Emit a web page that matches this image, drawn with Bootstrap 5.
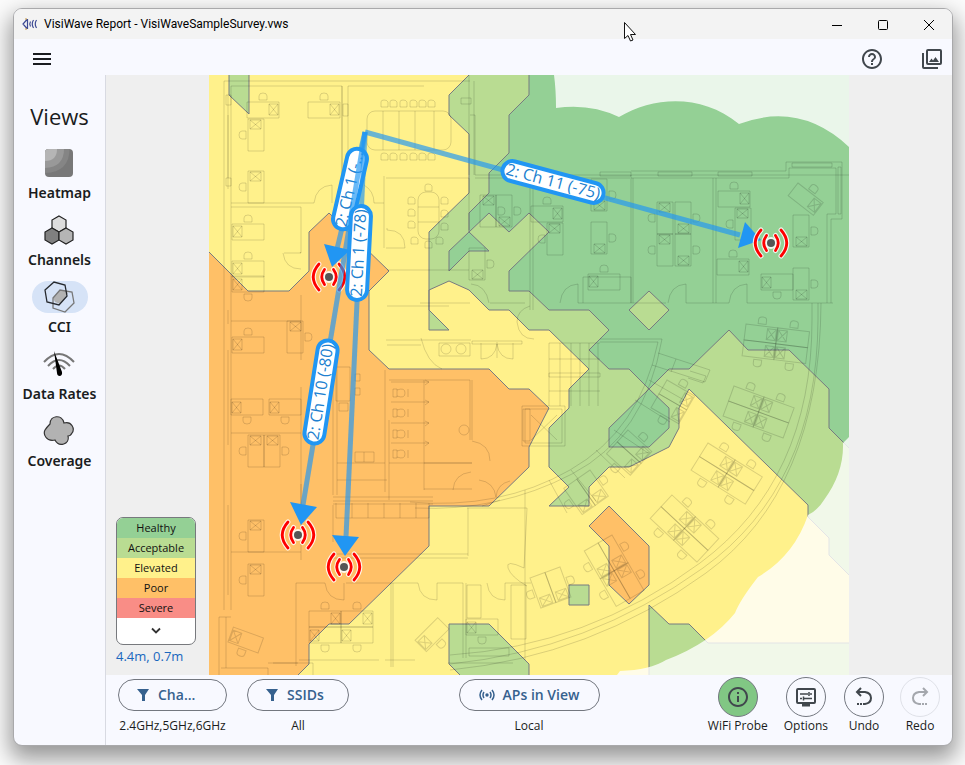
<!DOCTYPE html>
<html lang="en">
<head>
<meta charset="utf-8">
<meta name="viewport" content="width=device-width, initial-scale=1">
<title>VisiWave Report - VisiWaveSampleSurvey.vws</title>
<link href="https://cdn.jsdelivr.net/npm/bootstrap@5.3.0/dist/css/bootstrap.min.css" rel="stylesheet">
<style>
body{font-family:"Open Sans","Noto Sans",sans-serif;font-size:12px;line-height:20px;color:#1a1c20;background:#fbfbfb;padding:8px 12px 19px 13px}
.app-window{background:#f8f9ff;border:1px solid #a9a9ab;border-radius:9px;box-shadow:0 10px 22px 3px rgba(0,0,0,.4)}
.title-bar{background:#f3f3f3;height:30px;font-family:Roboto,"Open Sans",sans-serif;color:#000}
.win-btn{width:46px;height:30px;padding:0;border:0;background:none;color:#000}
.tool-bar{height:36px;padding-top:4px}
.tool-icons{gap:36px}
.plain-btn{border:0;background:none;padding:0;color:#41474d}
.side-nav{width:91px;padding-top:25px}
.views-title{font-weight:400;font-size:22px;line-height:32px;margin:0 0 15px}
.view-link{color:#1a1c20;font-family:"Noto Sans",sans-serif;font-size:14px;font-weight:600;text-decoration:none;margin-bottom:11px}
.view-icon{width:56px;height:32px;border-radius:16px;margin-bottom:4px}
.view-icon.current{background:#d6e3f7}
.map-pane{background:#efefef;border-left:1px solid #d8dae2;min-height:0}
.map-pane>svg{height:100%;width:100%}
.legend-box{left:10px;bottom:8px}
.legend-list{width:80px;border:1px solid #77797d;border-radius:7px;background:#fff;color:#111;font-size:11px}
.healthy{background:#94d095}.acceptable{background:#b9dc92}.elevated{background:#fff18b}.poor{background:#ffc067}.severe{background:#f98d86}
.legend-more{height:26px}
.position-text{color:#1967be;font-size:13px;line-height:22px}
.bottom-bar{display:grid;grid-template-columns:1fr auto 1fr;padding:2px 12px 9px;border-left:1px solid #d8dae2}
.pill-btn{height:32px;border:1px solid #73777f;border-radius:16px;background:none;color:#36618e;font-weight:600;font-size:14px;padding:0 17px;margin:2px 0 5px}
.round-btn{width:40px;height:40px;border:1px solid #73777f;border-radius:50%;background:none;color:#41474d;padding:0;margin-bottom:-1px}
.round-btn.active-probe{background:#81c784}
.round-btn:disabled{border-color:#dfe1e8;color:#a4a7ad}
.filter-w{width:109px}.ssid-w{width:102px}.aps-w{width:141px}
.pointer{left:624px;top:22px}
.plan{fill:none;stroke:#000;stroke-opacity:.14;stroke-width:1}
.contour{stroke:#777b80;stroke-width:1}
.link-line{stroke:#2196f3;stroke-opacity:.67;stroke-width:5;fill:none}
.tag-box{fill:#fff;stroke:#2196f3;stroke-width:4}
.tag-text{fill:#2080cf;font-family:"Open Sans",sans-serif;font-size:16px;text-anchor:middle}
</style>
<script src="https://cdn.jsdelivr.net/npm/bootstrap@5.3.0/dist/js/bootstrap.bundle.min.js"></script>
</head>
<body class="vh-100 d-flex">
<div class="app-window d-flex flex-column flex-grow-1 overflow-hidden">
  <header class="title-bar d-flex align-items-center flex-shrink-0">
    <svg class="ms-2 me-1" width="18" height="14" viewBox="0 0 18 14" fill="none" stroke="#3d4a94"><path d="M5 2.500 1 7l4 4.500M5.500 2v10M8.500 4.500q-1.500 2.500 0 5M11.500 3q-2.500 4 0 8M14.500 3q-2.500 4 0 8" stroke-width="1.200"/><path d="M4 1v2M4 11v2" stroke="#c69a45"/></svg>
    <span>VisiWave Report - VisiWaveSampleSurvey.vws</span>
    <div class="ms-auto d-flex">
      <button class="win-btn" aria-label="Minimize"><svg width="10" height="10" stroke="currentColor" fill="none"><path d="M0 5.500h10"/></svg></button>
      <button class="win-btn" aria-label="Maximize"><svg width="10" height="10" stroke="currentColor" fill="none"><rect x=".5" y=".5" width="9" height="9" rx="1"/></svg></button>
      <button class="win-btn" aria-label="Close"><svg width="10" height="10" stroke="currentColor" fill="none"><path d="M0 0l10 10M10 0L0 10"/></svg></button>
    </div>
  </header>
  <div class="tool-bar d-flex align-items-center flex-shrink-0 ps-3 pe-2">
    <button class="plain-btn" aria-label="Menu"><svg width="24" height="24" fill="#1a1c20"><path d="M3 6h18v2H3zM3 11h18v2H3zM3 16h18v2H3z"/></svg></button>
    <div class="tool-icons d-flex ms-auto">
    <button class="plain-btn" aria-label="Help"><svg width="24" height="24" fill="currentColor"><path d="M11 18h2v-2h-2v2zm1-16C6.480 2 2 6.480 2 12s4.480 10 10 10 10-4.480 10-10S17.520 2 12 2zm0 18c-4.410 0-8-3.590-8-8s3.590-8 8-8 8 3.590 8 8-3.590 8-8 8zm0-14c-2.210 0-4 1.790-4 4h2c0-1.100.9-2 2-2s2 .9 2 2c0 2-3 1.750-3 5h2c0-2.250 3-2.500 3-5 0-2.210-1.790-4-4-4z"/></svg></button>
    <button class="plain-btn" aria-label="Screenshots"><svg width="24" height="24" fill="none" stroke="currentColor" stroke-width="2"><rect x="7" y="3" width="14" height="14" rx="1"/><path d="M3 6v14q0 1 1 1h14"/><path d="M9 15l2.500-3.500 1.500 2 2.500-3.500 3.500 5z" fill="currentColor" stroke="none"/></svg></button>
    </div>
  </div>
  <div class="d-flex flex-grow-1 overflow-hidden">
    <nav class="side-nav d-flex flex-column align-items-center flex-shrink-0">
      <h1 class="views-title">Views</h1>
      <a href="#" class="view-link d-flex flex-column align-items-center"><span class="view-icon d-flex align-items-center justify-content-center"><svg width="28" height="28"><defs><clipPath id="sq"><rect width="28" height="28" rx="4"/></clipPath></defs><g clip-path="url(#sq)"><rect width="28" height="28" fill="#787878"/><path d="M0 0h24.500q0 23-24.500 24z" fill="#858585"/><path d="M0 0h19q0 18-19 19z" fill="#999"/><path d="M0 0h12q0 12-12 12z" fill="#b5b5b5"/></g></svg></span>Heatmap</a>
      <a href="#" class="view-link d-flex flex-column align-items-center"><span class="view-icon d-flex align-items-center justify-content-center"><svg width="32" height="30" stroke="#222" stroke-width="1.200"><path d="M16 1l7 4v8l-7 4-7-4V5z" fill="#ddd"/><path d="M9 13l7 4v8l-7 4-7-4v-8z" fill="#808080"/><path d="M23 13l7 4v8l-7 4-7-4v-8z" fill="#b5b5b5"/></svg></span>Channels</a>
      <a href="#" class="view-link d-flex flex-column align-items-center" aria-current="page"><span class="view-icon current d-flex align-items-center justify-content-center"><svg width="32" height="32" fill="none" stroke-width="1.300"><path d="M9 17l7-8 6 1 2 2-8 11-5-2z" fill="#b2b2b2"/><path d="M9 17l7-8 12 2 2 11-9 9-12-4z" stroke="#777"/><path d="M1 9l9-8 11 3 2 11-8 9-12-3z" stroke="#25282d"/></svg></span>CCI</a>
      <a href="#" class="view-link d-flex flex-column align-items-center"><span class="view-icon d-flex align-items-center justify-content-center"><svg width="32" height="30" viewBox="0 -2 32 30" fill="none" stroke="#777" stroke-width="2"><path d="M1 11q15-16 30 0M5 15q11-12 22 0M10 18q6-7 12 0"/><path d="M11 0l8 21c1 5-5 5-5 1z" fill="#000" stroke="none"/></svg></span>Data Rates</a>
      <a href="#" class="view-link d-flex flex-column align-items-center"><span class="view-icon d-flex align-items-center justify-content-center"><svg width="32" height="32" fill="#b2b2b2" stroke="#333" stroke-width="1.200"><path d="M7 9C7 0 19-1 21 8c8-2 11 6 8 10-1 2-3 3-4 3 2 8-9 12-13 4C3 27 0 19 2 15q2-3 5-6z"/></svg></span>Coverage</a>
    </nav>
    <main class="flex-grow-1 d-flex flex-column overflow-hidden">
      <div class="map-pane flex-grow-1 position-relative">
        <svg viewBox="209 75 640 600" class="d-block" role="img" aria-label="Floor plan with co-channel interference">
          <defs>
            <clipPath id="area"><rect x="209" y="75" width="640" height="600"/></clipPath>
            <g id="dk"><path d="M0 0h32v16H0zM22 2h9v11h-9zM22 2l9 11M31 2l-9 11M12-2v-4q0-3 4-3t4 3v4z"/></g>
            <g id="pd"><use href="#dk"/><use href="#dk" transform="translate(0 32) scale(1 -1)"/></g>
            <g id="q4"><use href="#dk"/><use href="#dk" transform="translate(64) scale(-1 1)"/><use href="#dk" transform="translate(0 32) scale(1 -1)"/><use href="#dk" transform="translate(64 32) scale(-1 -1)"/></g>
            <g id="wc"><path d="M0 0h38M2 7h4v8H2zM6 8q8-3 8 3t-8 3M17 7v8M34-2l4 2-4 3"/></g>
            <g id="ch"><path d="M0 7V2q0-2 3-2t4 2v5z"/></g>
            <g id="ap" fill="none" stroke-linecap="round">
              <g stroke="#fff" stroke-opacity=".85" stroke-width="5"><path id="wv" d="M-4.500-7.500q-5.500 7.500 0 15M4.500-7.500q5.500 7.500 0 15M-10-13q-11.500 13 0 26M10-13q11.500 13 0 26"/></g>
              <circle r="6" fill="#fff" fill-opacity=".85"/><use href="#wv" stroke="#f00" stroke-width="2.800"/><circle r="4" fill="#555"/>
            </g>
          </defs>
          <g clip-path="url(#area)">
            <rect x="209" y="75" width="640" height="600" fill="#94d095"/>
            <path class="contour" fill="#b9dc92" fill-rule="evenodd" d="M469 70H529V95L509 115V153L489 173V193L469 213V232L489 213 509 232 529 213 549 232 509 271V291H529L549 310H589L609 330 589 350 609 369H629L649 389 669 369H689L729 330 748 350H789L829 389V428L860 459V690H400V70zM469 232L489 251H469L449 271V251zM649 389L669 408V428L649 447H609V428z"/>
            <path class="contour" fill="#b9dc92" d="M649 291l20 19-20 20-20-20z"/>
            <path class="contour" fill="#fff18b" d="M200 70H474L449 95V115L469 134V193L429 232V290L449 281 469 290 489 310H509L529 330H549L589 369 569 389V408L549 428V467L569 487 549 506H589V487L609 467H629L669 447 679 428V408L689 389 808 505V517L829 538V555L860 586V643H708L689 624H669L649 605V690H200z"/>
            <path class="contour" fill="#b9dc92" d="M229 70V95L249 114V70zM429 290V330H449L429 310zM569 585h20v20h-20zM449 624H489L529 664V690H475L449 664z"/>
            <path class="contour" fill="#ffc067" d="M200 243L248 291H289L309 271V232L329 213 389 271 369 291V350L389 369H489L509 389H529L549 408 529 447V467L489 506H429V546L349 624H329L309 644V664L283 690H200zM589 526L609 506 649 546V585L629 604 609 585V546z"/>

            <g class="plan">
              <path d="M224 81H470M231 86H342V202M224 81V335M231 86V610M228 95V189M228 115V178M226 95h5v10h-5zM226 178h5v8h-5zM231 203H314M342 86V203M348 86H424M348 86V203M343 104h5v12h-5zM231 207H301V253M301 295V360M301 387V560M301 484v35M284 253h17q-1-1-1 0M283 253q2 16 18 16M314 203q2-17 18-18v18M364 185q10 6 10 18h10M384 176v30M384 206v42M386 178H469M386 248h19M405 248q0-18-18-18v-2M387 270H469M387 306H449M231 321H301M231 433H301M231 552H301M219 617V675M226 617V668M219 617h12M221 668h47V675M273 663h40v12M268 663h30M296 583v83M296 583h29M325 583q2 17 19 17v-17M346 583h72M391 583v84M393 583v84M418 583q2 17 19 17v-17h26M463 583v75M466 583v75M487 583q2 17 18 17v-17h26M333 505h0v37M333 497h100M333 501h100M333 504h100M333 554H468M333 558H468M468 508v48M336 503v15h93v-15M352 503v15M368 503v15M384 503v15M400 503v15M416 503v15M224 335V610M228 310v14M228 350v95M228 505v90"/>
              <path d="M469 75V175M474 81V175M470 115h5v60M461 98h10v6h-10zM475 175H850M475 178H630M530 178V310M533 178V310M469 178V230M631 171H786V162H842V219H831V303M631 178H789V168H836V214H827V303M631 175V303M633 178V303M713 178V303M716 178V303M658 172h34v4h-34zM718 172h34v4h-34zM792 163h40v4h-40zM838 167v47h3v-47zM600 172h31v4h-31zM490 303H525M489 303q-3-18-18-19M560 303q2-18 18-19v19h88M668 303q2-18 18-19v19h43M729 303q2-18 18-19v19h86M530 306q-13 4-13 16 2 17 17 17M583 303v-26h48v26M420 303h50M386 340h85M387 345h34M421 338q6 25 21 31"/>
              <path d="M439 343h31v13h-31zM472 341h50v3h-50zM481 343v16M497 342v16M513 343v16M481 359q14 0 16-15 2 15 16 15M549 343v63M560 343v63M571 343v63M580 343v63M589 343v63M598 343v63M549 343H600M549 359H600M549 373H600v4h-51zM549 391H600M522 406h43v40h-43zM525 409h37v34h-37zM531 415l26 25M557 415l-26 25M523 409h7v32h-7zM470 380v60M472 380v60M472 463H424M389 380h81M389 420V500M424 380v110M333 345v150M337 345v150M337 480h50M337 463h48M389 463H472M472 441q18 3 18 20M453 490q1-16 18-18M479 480q15 2 17 17 1-13 14-16M424 489H472M385 370v122"/>
              <circle cx="446" cy="349" r="5"/><circle cx="461" cy="349" r="5"/><circle cx="464" cy="430" r="5"/>
              <path d="M658 342H600M662 339H600M658 342Q640 430 570 470T410 502M662 339Q645 436 572 474T415 508M812 303V320Q812 480 700 563T450 655M818 303V320Q817 486 703 568T450 664M821 303Q820 490 706 573T450 670M658 353l52 17-5 12-53-17M676 359l-5 13M690 371l16 5-3 7-15-5M649 380l35 20M635 400l35 22M614 430l34 23M596 450l29 28M571 470l25 31M549 480l18 33M525 490v170M500 500l-18 6M467 508h60l-3 60M524 568q-19-9-16 0t19 18M448 663h65M299 660h80M385 660h30"/>
            </g>
            <g class="plan">
              <use href="#dk" transform="translate(247 102)"/><use href="#dk" transform="translate(308 102)"/><use href="#dk" transform="translate(248 151) rotate(-90)"/><use href="#dk" transform="translate(248 203) rotate(-90)"/>
              <use href="#dk" transform="translate(264 224) scale(-1 1)"/><use href="#dk" transform="translate(264 261) scale(-1 1)"/><use href="#dk" transform="translate(264 292) scale(-1 -1)"/>
              <use href="#dk" transform="translate(264 337) scale(-1 1)"/><use href="#dk" transform="translate(287 353) rotate(-90) scale(1 -1) translate(0 -16)"/><use href="#dk" transform="translate(263 415) scale(-1 -1)"/><use href="#dk" transform="translate(301 415) scale(-1 -1)"/>
              <use href="#dk" transform="translate(248 467) rotate(-90)"/><use href="#dk" transform="translate(280 467) rotate(-90) scale(1 -1)"/>
              <use href="#dk" transform="translate(248 552) rotate(-90)"/><use href="#dk" transform="translate(248 596) rotate(-90)"/><use href="#dk" transform="translate(258 653) rotate(200)"/>
              <use href="#dk" transform="translate(309 611)"/><use href="#dk" transform="translate(341 611)"/><use href="#dk" transform="translate(341 643) scale(-1 -1)"/><use href="#dk" transform="translate(373 643) scale(-1 -1)"/>
              <use href="#dk" transform="translate(449 629) rotate(135)"/><use href="#dk" transform="translate(498 635) scale(-1 -1)"/><path d="M467 585h14v33h-14zM511 585h15v54h-15zM469 648h40v8h-40z"/>
              <use href="#dk" transform="translate(480 195) rotate(90) scale(-1 1) translate(-32 -16)"/><use href="#dk" transform="translate(496 227) rotate(-90) scale(-1 -1) translate(-32 -16)"/><use href="#dk" transform="translate(531 206)"/><use href="#dk" transform="translate(547 255) rotate(-90)"/><use href="#dk" transform="translate(607 179) rotate(90)"/><use href="#dk" transform="translate(607 222) rotate(90)"/><use href="#dk" transform="translate(485 248) rotate(90)"/><use href="#dk" transform="translate(620 274) scale(-1 1)"/>
              <use href="#dk" transform="translate(657 234) rotate(-90)"/><use href="#dk" transform="translate(691 202) rotate(90)"/><use href="#dk" transform="translate(657 266) rotate(-90)"/><use href="#dk" transform="translate(691 234) rotate(90)"/>
              <use href="#dk" transform="translate(718 191)"/><use href="#dk" transform="translate(735 240) rotate(-90)"/><use href="#dk" transform="translate(717 259)"/><use href="#dk" transform="translate(798 183) rotate(38)"/><use href="#dk" transform="translate(809 215) rotate(90)"/><use href="#dk" transform="translate(809 268) rotate(90)"/><use href="#dk" transform="translate(793 290) scale(-1 -1)"/>
              <use href="#q4" transform="translate(746 324) rotate(7)"/><use href="#q4" transform="translate(734 386) rotate(20)"/><use href="#q4" transform="translate(708 443) rotate(32)"/><use href="#q4" transform="translate(672 495) rotate(43)"/><use href="#q4" transform="translate(612 535) rotate(60)"/><use href="#pd" transform="translate(560 567) rotate(70)"/><use href="#pd" transform="translate(667 380) rotate(30)"/><use href="#pd" transform="translate(628 430) rotate(42)"/><use href="#pd" transform="translate(590 470) rotate(55)"/>
              <rect x="367" y="111" width="84" height="39" rx="8"/><path d="M383 111v39M399 111v39M415 111v39M434 111v39"/>
              <use href="#ch" x="381" y="100"/><use href="#ch" x="390" y="100"/><use href="#ch" x="400" y="100"/><use href="#ch" x="410" y="100"/><use href="#ch" x="419" y="100"/><use href="#ch" x="428" y="100"/><use href="#ch" x="381" y="153"/><use href="#ch" x="390" y="153"/><use href="#ch" x="400" y="153"/><use href="#ch" x="410" y="153"/><use href="#ch" x="419" y="153"/><use href="#ch" x="428" y="153"/>
              <rect x="418" y="192" width="21" height="47" rx="8"/><path d="M418 207h21M418 222h21"/><use href="#ch" x="408" y="197"/><use href="#ch" x="408" y="209"/><use href="#ch" x="408" y="221"/><use href="#ch" x="411" y="237"/><use href="#ch" x="425" y="184"/><use href="#ch" x="441" y="197"/><use href="#ch" x="441" y="210"/><use href="#ch" x="441" y="223"/><use href="#ch" x="425" y="241"/><use href="#ch" x="436" y="237"/>
              <use href="#wc" x="391" y="382"/><use href="#wc" x="391" y="402"/><use href="#wc" x="391" y="423"/><use href="#wc" x="391" y="443"/><path d="M336 367h14v34h-14zM339 403h9v8h-9zM355 374h5v7h-5zM355 388h5v7h-5zM355 452h19v10h-19zM364 452v10"/>
            </g>
            <path fill="#fff" fill-opacity=".8" d="M554 70V75Q556 90 556 108Q590 103 619 117C655 96 702 94 739 124Q800 101 849 147L860 150V60H554zM860 426L843 443Q844 473 824 500Q818 510 808 515Q794 556 758 577Q740 600 735 613Q711 643 666 660Q650 670 620 671L617 675V690H860z"/>
          </g>

          <g class="link-line"><path d="M365 132L740 235"/><path d="M365 132L337 249"/></g>
          <g fill="#2196f3"><path d="M745 222l-7 26 23-8z"/><path d="M324 244l26 6-18 17z"/></g>
          <g transform="translate(553 182) rotate(15)"><rect class="tag-box" x="-52" y="-10" width="104" height="20" rx="10"/><text class="tag-text" y="5">2: Ch 11 (-75)</text></g>
          <g transform="translate(350 189) rotate(-77)"><rect class="tag-box" x="-41" y="-10" width="82" height="20" rx="10"/><text class="tag-text" y="5">2: Ch 1 (-...</text></g>
          <use href="#ap" x="771" y="243"/><use href="#ap" x="329" y="277"/>
          <path class="link-line" d="M365 132L303 505"/>
          <path fill="#2196f3" d="M290 502l27 5-16 18z"/>
          <g transform="translate(321 392) rotate(-81)"><rect class="tag-box" x="-52" y="-10" width="104" height="20" rx="10"/><text class="tag-text" y="5">2: Ch 10 (-80)</text></g>
          <path class="link-line" d="M365 132L346 537"/>
          <path fill="#2196f3" d="M332 535l27 2-14 19z"/>
          <g transform="translate(359 253) rotate(-87)"><rect class="tag-box" x="-47" y="-10" width="94" height="20" rx="10"/><text class="tag-text" y="5">2: Ch 1 (-78)</text></g>
          <use href="#ap" x="298" y="535"/><use href="#ap" x="344" y="567"/>
        </svg>
        <div class="legend-box position-absolute">
          <div class="legend-list overflow-hidden text-center">
            <div class="healthy">Healthy</div><div class="acceptable">Acceptable</div><div class="elevated">Elevated</div><div class="poor">Poor</div><div class="severe">Severe</div>
            <button class="legend-more plain-btn w-100 d-flex align-items-center justify-content-center" aria-label="More"><svg width="12" height="8" fill="none" stroke="#333" stroke-width="1.800"><path d="M2 1.500l4 4 4-4"/></svg></button>
          </div>
          <div class="position-text">4.4m, 0.7m</div>
        </div>
      </div>
      <footer class="bottom-bar flex-shrink-0">
        <div class="d-flex text-center">
          <div class="filter-w me-3"><button class="pill-btn filter-w d-flex align-items-center gap-2"><svg width="14" height="14" fill="currentColor"><path d="M1 1h12L9 7v6H6V7z"/></svg><span>Cha...</span></button>2.4GHz,5GHz,6GHz</div>
          <div class="ssid-w ms-1"><button class="pill-btn ssid-w d-flex align-items-center gap-2"><svg width="14" height="14" fill="currentColor"><path d="M1 1h12L9 7v6H6V7z"/></svg><span>SSIDs</span></button>All</div>
        </div>
        <div class="text-center"><button class="pill-btn aps-w d-flex align-items-center justify-content-center gap-2 px-0"><svg width="16" height="14" fill="none" stroke="currentColor" stroke-width="1.500"><path d="M5 4q-2 3 0 6M11 4q2 3 0 6M3 2q-4 5 0 10M13 2q4 5 0 10"/><circle cx="8" cy="7" r="1.700" fill="currentColor" stroke="none"/></svg><span>APs in View</span></button>Local</div>
        <div class="d-flex justify-content-end gap-3 text-center">
          <div><button class="round-btn active-probe" aria-label="WiFi Probe"><svg width="24" height="24" fill="currentColor"><path d="M11 7h2v2h-2zm0 4h2v6h-2zm1-9C6.480 2 2 6.480 2 12s4.480 10 10 10 10-4.480 10-10S17.520 2 12 2zm0 18c-4.410 0-8-3.590-8-8s3.590-8 8-8 8 3.590 8 8-3.590 8-8 8z"/></svg></button><div>WiFi Probe</div></div>
          <div><button class="round-btn" aria-label="Options"><svg width="24" height="24" fill="none" stroke="currentColor" stroke-width="2"><rect x="3" y="4" width="18" height="14" rx="1"/><path d="M8 20h8" stroke-width="3"/><path d="M6 9h8M16 9h2M15 7v4M6 13.500h2M10 13.500h8M9.500 11.500v4" stroke-width="1.500"/></svg></button><div>Options</div></div>
          <div><button class="round-btn" aria-label="Undo"><svg width="24" height="24" fill="none" stroke="currentColor" stroke-width="2"><path d="M9 3L5 7l4 4M5 7h8q6 1 6 6t-6 6h-2M5 19h2M8 19h2"/></svg></button><div>Undo</div></div>
          <div><button class="round-btn" aria-label="Redo" disabled><svg width="24" height="24" fill="none" stroke="currentColor" stroke-width="2"><path d="M15 3l4 4-4 4M19 7h-8q-6 1-6 6t6 6h2M14 19h2M17 19h2"/></svg></button><div>Redo</div></div>
        </div>
      </footer>
    </main>
  </div>
</div>
<svg class="pointer position-absolute" width="14" height="20" fill="#fff" stroke="#111"><path d="M.5.5v16l3.500-3 2.500 5.500 2.500-1-2.500-5.500h5z"/></svg>
</body>
</html>
